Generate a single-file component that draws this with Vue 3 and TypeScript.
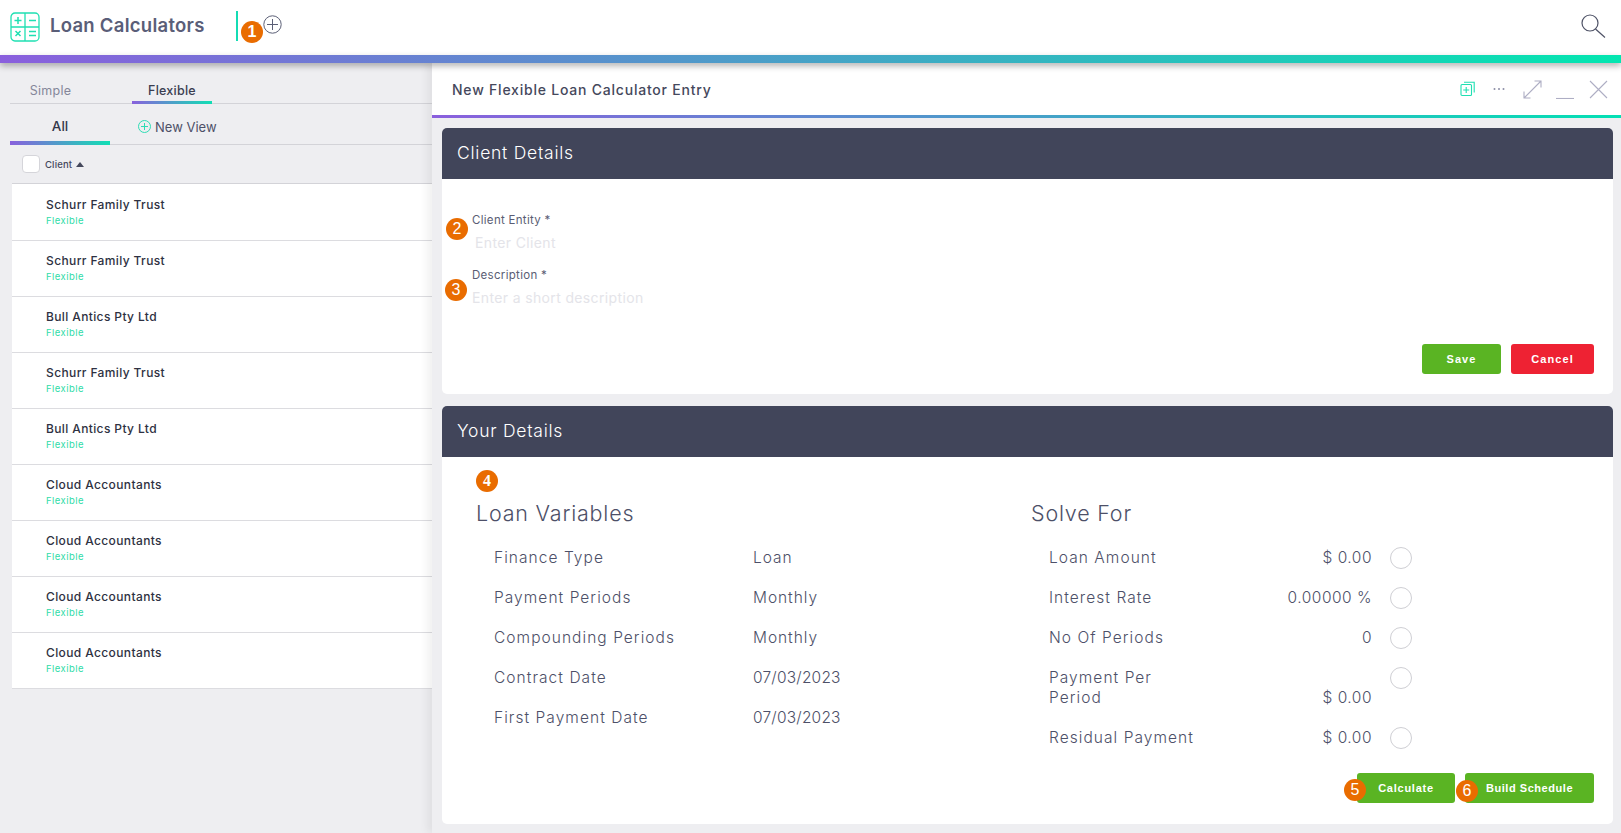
<script setup lang="ts">
const clients: string[] = ['Schurr Family Trust','Schurr Family Trust','Bull Antics Pty Ltd','Schurr Family Trust','Bull Antics Pty Ltd','Cloud Accountants','Cloud Accountants','Cloud Accountants','Cloud Accountants']
const variables: [string,string][] = [['Finance Type','Loan'],['Payment Periods','Monthly'],['Compounding Periods','Monthly'],['Contract Date','07/03/2023'],['First Payment Date','07/03/2023']]
const solve: {label:string,value:string,tall?:boolean}[] = [
 {label:'Loan Amount',value:'$ 0.00'},{label:'Interest Rate',value:'0.00000 %'},{label:'No Of Periods',value:'0'},
 {label:'Payment Per Period',value:'$ 0.00',tall:true},{label:'Residual Payment',value:'$ 0.00'}]
</script>

<template>
  <div class="app">
    <header class="top">
      <svg class="logo" width="30" height="30" viewBox="0 0 30 30" fill="none" stroke="#1fe0b2" stroke-width="1.3">
        <rect x="1" y="1" width="28" height="28" rx="4"/>
        <path d="M1 15H29M15 1V29"/>
        <path d="M8 5V12M4.5 8.5H11.5M19 8.5H26M5.5 19L10.5 24M10.5 19L5.5 24M19 19.5H26M19 23.5H26" stroke-width="1.5"/>
      </svg>
      <h1 class="brand">Loan Calculators</h1>
      <span class="divider"></span>
      <svg class="add" width="19" height="19" viewBox="0 0 19 19" fill="none" stroke="#5b5f76"><circle cx="9.5" cy="9.5" r="8.7"/><path d="M9.5 4V15M4 9.5H15"/></svg>
      <svg class="search" width="26" height="26" viewBox="0 0 26 26" fill="none" stroke="#4e5266" stroke-width="1.2"><circle cx="10" cy="10" r="8"/><path d="M15.5 16L25 24.5"/></svg>
    </header>
    <div class="rainbow"></div>

    <main class="main">
      <aside class="side">
        <nav class="tabs">
          <span class="tab">Simple</span>
          <span class="tab on">Flexible</span>
        </nav>
        <nav class="views">
          <span class="view">All</span>
          <span class="newview">
            <svg width="13" height="13" viewBox="0 0 13 13" fill="none" stroke="#2fdcb4"><circle cx="6.5" cy="6.5" r="6"/><path d="M6.5 3V10M3 6.5H10"/></svg>
            New View
          </span>
        </nav>
        <div class="listhead">
          <span class="check"></span>
          <span>Client</span>
          <span class="caret"></span>
        </div>
        <ul class="list">
          <li v-for="(c,i) in clients" :key="i" class="row">
            <div class="rname">{{ c }}</div>
            <div class="rtype">Flexible</div>
          </li>
        </ul>
      </aside>

      <section class="panel">
        <div class="ptitle">
          <span class="ptext">New Flexible Loan Calculator Entry</span>
          <div class="ptools">
            <svg width="16" height="16" viewBox="0 0 16 16" fill="none" stroke="#1fe0b2" stroke-width="1.1"><rect x="1" y="3.5" width="10.5" height="11" rx="1"/><path d="M6.2 6V12M3.2 9H9.2M4 1.2H14.2V11.5"/></svg>
            <svg class="dots" width="12" height="4" viewBox="0 0 12 4" fill="#8d8ea6"><circle cx="1.5" cy="2" r="1"/><circle cx="6" cy="2" r="1"/><circle cx="10.5" cy="2" r="1"/></svg>
            <svg class="exp" width="19" height="19" viewBox="0 0 19 19" fill="none" stroke="#aeaec4" stroke-width="1.1"><path d="M1 18L18 1M11.5 1H18V7.5M1 11.5V18H7.5"/></svg>
            <svg class="min" width="18" height="19" viewBox="0 0 18 19" fill="none" stroke="#aeaec4" stroke-width="1.1"><path d="M0 18.5H18"/></svg>
            <svg class="cls" width="19" height="19" viewBox="0 0 19 19" fill="none" stroke="#aeaec4" stroke-width="1.1"><path d="M1 1L18 18M18 1L1 18"/></svg>
          </div>
        </div>
        <div class="pline"></div>

        <div class="pbody">
          <article class="card c1">
            <h2 class="chead">Client Details</h2>
            <div class="form">
              <label class="lbl">Client Entity *</label>
              <div class="ph ph1">Enter Client</div>
              <label class="lbl l2">Description *</label>
              <div class="ph">Enter a short description</div>
              <div class="actions">
                <button class="btn green save">Save</button>
                <button class="btn red">Cancel</button>
              </div>
            </div>
          </article>

          <article class="card c2">
            <h2 class="chead">Your Details</h2>
            <div class="cols">
              <div class="col left">
                <h3 class="sub">Loan Variables</h3>
                <div v-for="v in variables" :key="v[0]" class="vrow">
                  <span class="vl">{{ v[0] }}</span><span class="vv" :class="{date:v[1].includes('/')}">{{ v[1] }}</span>
                </div>
              </div>
              <div class="col right">
                <h3 class="sub">Solve For</h3>
                <div v-for="s in solve" :key="s.label" class="srow" :class="{tall:s.tall}">
                  <span class="sl">{{ s.label }}</span>
                  <span class="sv">{{ s.value }}</span>
                  <span class="radio"></span>
                </div>
              </div>
            </div>
            <div class="actions2">
              <button class="btn green calc">Calculate</button>
              <button class="btn green build">Build Schedule</button>
            </div>
          </article>
        </div>
      </section>
    </main>

    <span class="badge b1">1</span>
    <span class="badge b2">2</span>
    <span class="badge b3">3</span>
    <span class="badge b4">4</span>
    <span class="badge b5">5</span>
    <span class="badge b6">6</span>
  </div>
</template>

<style>
html, body { margin: 0; background: #fff; }
</style>

<style scoped>
* { box-sizing: border-box; }
.app { position: relative; width: 1621px; height: 833px; overflow: hidden; font-family: Inter, "Open Sans", sans-serif; color: #4d5068; background: #eeeef1; }
.top { height: 55px; background: #fff; display: flex; align-items: center; padding: 0 15px 0 10px; }
.logo { margin-top: -1px; }
.brand { margin: -6px 0 0 10px; font-size: 18.5px; font-weight: 600; letter-spacing: .27px; color: #5a5e78; width: 186px; white-space: nowrap; }
.divider { width: 2px; height: 30px; background: #14dcb4; margin-top: -4px; }
.add { margin: -6px 0 0 25px; }
.search { margin: -4px 0 0 auto; }
.rainbow { height: 8px; background: linear-gradient(90deg, #8a5fdd 0%, #03e6b0 100%); box-shadow: 0 3px 6px rgba(0,0,0,.3); position: relative; z-index: 2; }
.main { display: flex; height: 770px; }
.side { width: 432px; flex: none; padding-left: 10px; }
.tabs { display: flex; height: 41px; border-bottom: 1px solid #d3d3d8; }
.tab { width: 80px; display: flex; align-items: center; justify-content: center; font-size: 12.5px; font-weight: 400; letter-spacing: .25px; color: #85879a; padding-top: 16px; border-bottom: 3px solid transparent; height: 41px; }
.tab:first-child { width: 122px; padding-right: 41px; }
.tab.on { color: #3a3d50; border-image: linear-gradient(90deg, #8a5fdd, #10e0b4) 1; font-weight: 500; }
.views { display: flex; height: 41px; border-bottom: 1px solid #d3d3d8; }
.view { width: 100px; display: flex; align-items: center; justify-content: center; font-size: 13.5px; font-weight: 500; color: #33364a; border-bottom: 4px solid; border-image: linear-gradient(90deg, #8a5fdd, #10e0b4) 1; height: 41px; padding-top: 6px; }
.newview { margin-left: 28px; display: flex; align-items: center; gap: 4px; font-size: 13px; font-weight: 400; color: #4d5068; padding-top: 5px; }
.listhead { height: 38px; margin-left: 12px; display: flex; align-items: center; font-size: 9.5px; font-weight: 500; letter-spacing: .15px; color: #45485c; }
.check { width: 18px; height: 18px; background: #fff; border: 1px solid #d5d5da; border-radius: 4px; margin-right: 5px; }
.caret { width: 0; height: 0; border: 4px solid transparent; border-bottom: 5px solid #45485c; border-top: 0; margin-left: 4px; }
.list { list-style: none; margin: 0 0 0 2px; padding: 1px 0 0; background: #fff; border-top: 1px solid #d3d3d8; }
.row { height: 56px; padding: 12px 0 0 34px; border-bottom: 1px solid #dcdce0; }
.rname { font-size: 12px; font-weight: 500; letter-spacing: .38px; color: #2e3142; line-height: 16px; }
.rtype { font-size: 9.5px; font-weight: 400; letter-spacing: .45px; color: #2fdca8; line-height: 14px; margin-top: 1px; }
.panel { flex: 1; display: flex; flex-direction: column; box-shadow: -5px 0 8px rgba(0,0,0,.06); position: relative; }
.ptitle { height: 52px; background: #fff; display: flex; align-items: center; padding: 0 13px 0 20px; }
.ptext { font-size: 14px; font-weight: 500; letter-spacing: .78px; color: #45485c; padding-top: 1px; white-space: nowrap; }
.ptools { margin-left: auto; display: flex; align-items: center; }
.dots { margin-left: 17px; }
.exp { margin-left: 18px; }
.min { margin-left: 14px; }
.cls { margin-left: 15px; }
.pline { height: 3px; background: linear-gradient(90deg, #8a5fdd, #03e0b4); }
.pbody { padding: 10px 8px 0 10px; }
.card { background: #fff; border-radius: 5px; overflow: hidden; }
.c1 { height: 266px; }
.c2 { height: 418px; margin-top: 12px; }
.chead { margin: 0; height: 51px; background: #41455a; color: #fff; font-size: 17.5px; font-weight: 300; letter-spacing: .75px; display: flex; align-items: center; padding: 0 0 2px 15px; }
.form { padding: 34px 0 0 30px; position: relative; height: 215px; }
.lbl { display: block; font-size: 11.5px; line-height: 14px; font-weight: 400; letter-spacing: .3px; color: #5a5d74; }
.ph { font-size: 14px; line-height: 18px; letter-spacing: .36px; color: #e4e4e9; margin-top: 7px; }
.ph1 { padding-left: 3px; }
.l2 { margin-top: 16px; }
.actions { display: flex; justify-content: flex-end; gap: 10px; position: absolute; right: 19px; bottom: 20px; }
.btn { border: 0; border-radius: 3px; color: #fff; font-family: "Liberation Sans", sans-serif; font-weight: 700; font-size: 11px; letter-spacing: 1.1px; height: 30px; }
.green { background: #5ab423; }
.red { background: #ee2233; width: 83px; }
.save { width: 79px; }
.cols { display: flex; height: 316px; padding: 43px 0 0 34px; }
.col.left { width: 555px; }
.sub { margin: 0 0 20px; font-size: 21.5px; font-weight: 300; letter-spacing: .8px; line-height: 26px; color: #4d5068; }
.vrow { display: flex; height: 40px; padding-left: 18px; font-size: 15.5px; font-weight: 300; letter-spacing: 1.05px; line-height: 24px; }
.vl { width: 259px; white-space: nowrap; }
.vv { letter-spacing: .95px; }
.date { letter-spacing: .2px; }
.srow { display: flex; height: 40px; padding-left: 18px; font-size: 15.5px; font-weight: 300; letter-spacing: 1.05px; line-height: 24px; position: relative; width: 381px; }
.sl { white-space: nowrap; }
.sv { position: absolute; right: 40px; top: 0; letter-spacing: .5px; }
.radio { position: absolute; right: 0; top: 1px; width: 22px; height: 22px; border-radius: 50%; border: 1px solid #cfcfd4; }
.tall { height: 60px; }
.tall .sl { width: 130px; line-height: 20px; padding-top: 2px; white-space: normal; }
.tall .sv { top: 20px; }
.actions2 { display: flex; justify-content: flex-end; gap: 10px; padding-right: 19px; }
.calc { width: 98px; letter-spacing: .75px; }
.build { width: 129px; letter-spacing: .55px; }
.badge { position: absolute; width: 22px; height: 22px; border-radius: 50%; background: #e96c00; color: #fff; font-family: "Liberation Sans", sans-serif; font-size: 16px; display: flex; align-items: center; justify-content: center; z-index: 5; }
.b1 { left: 241px; top: 21px; font-weight: 700; }
.b2 { left: 446px; top: 218px; }
.b3 { left: 445px; top: 279px; }
.b4 { left: 476px; top: 470px; font-family: "Liberation Serif", serif; font-weight: 700; }
.b5 { left: 1344px; top: 779px; }
.b6 { left: 1456px; top: 780px; }
</style>
